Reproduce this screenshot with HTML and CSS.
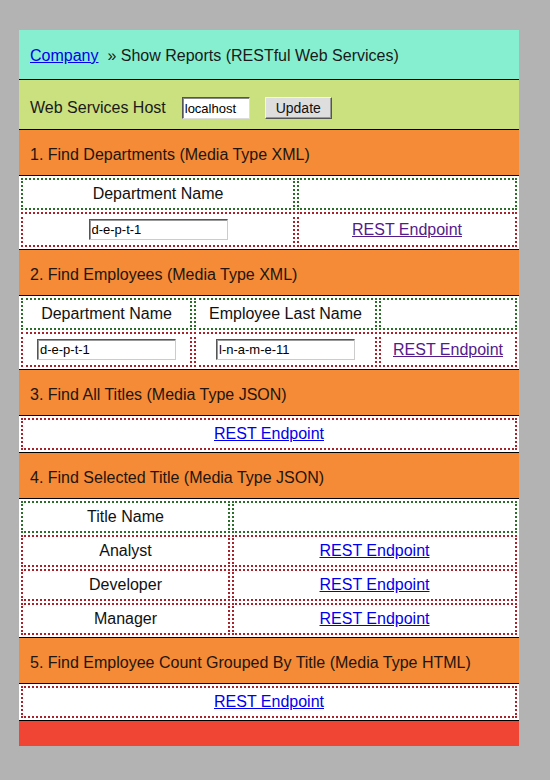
FILE: index.html
```html
<!DOCTYPE html>
<html>
<head>
<meta charset="utf-8">
<title>Show Reports</title>
<link rel="stylesheet" href="styles.css">
</head>
<body>
<div class="page">
  <div class="crumbs"><a href="#" class="link">Company</a>&nbsp;&nbsp;» Show Reports (RESTful Web Services)</div>
  <div class="host">
    <span class="host-label">Web Services Host</span>
    <input class="host-input" type="text" value="localhost">
    <button class="btn" type="button">Update</button>
  </div>

  <div class="sec-head">1. Find Departments (Media Type XML)</div>
  <table class="grid">
    <tr class="head-row"><td class="w-274">Department Name</td><td></td></tr>
    <tr class="data-row"><td><input class="field" type="text" value="d-e-p-t-1"></td><td><a href="#" class="link visited">REST Endpoint</a></td></tr>
  </table>

  <div class="sec-head">2. Find Employees (Media Type XML)</div>
  <table class="grid">
    <tr class="head-row"><td class="w-171">Department Name</td><td class="w-183">Employee Last Name</td><td></td></tr>
    <tr class="data-row"><td><input class="field" type="text" value="d-e-p-t-1"></td><td><input class="field" type="text" value="l-n-a-m-e-11"></td><td><a href="#" class="link visited">REST Endpoint</a></td></tr>
  </table>

  <div class="sec-head">3. Find All Titles (Media Type JSON)</div>
  <table class="grid">
    <tr class="data-row"><td><a href="#" class="link">REST Endpoint</a></td></tr>
  </table>

  <div class="sec-head">4. Find Selected Title (Media Type JSON)</div>
  <table class="grid">
    <tr class="head-row"><td class="w-208">Title Name</td><td></td></tr>
    <tr class="data-row"><td>Analyst</td><td><a href="#" class="link">REST Endpoint</a></td></tr>
    <tr class="data-row"><td>Developer</td><td><a href="#" class="link">REST Endpoint</a></td></tr>
    <tr class="data-row"><td>Manager</td><td><a href="#" class="link">REST Endpoint</a></td></tr>
  </table>

  <div class="sec-head">5. Find Employee Count Grouped By Title (Media Type HTML)</div>
  <table class="grid">
    <tr class="data-row"><td><a href="#" class="link">REST Endpoint</a></td></tr>
  </table>

  <div class="footer"></div>
</div>
</body>
</html>
```

FILE: styles.css
```css
html, body {
  margin: 0;
  padding: 0;
  background: #b3b3b3;
}

body {
  font-family: "Liberation Sans", Arial, sans-serif;
  font-size: 16px;
  line-height: 18px;
  color: #1a1a1a;
}

.page {
  width: 500px;
  margin: 30px 0 0 19px;
  display: flex;
  flex-direction: column;
}

.link {
  color: #0000ee;
  text-decoration: underline;
}

.link.visited {
  color: #551a8b;
}

.crumbs {
  height: 50px;
  box-sizing: border-box;
  background: #86efd0;
  border-bottom: 1px solid #000;
  display: flex;
  align-items: center;
  padding: 2px 11px 0;
  white-space: pre;
}

.host {
  height: 50px;
  box-sizing: border-box;
  background: #cbe07e;
  border-bottom: 1px solid #000;
  display: flex;
  align-items: center;
  padding: 7px 11px 0;
}

.host-label {
  margin-right: 16px;
}

.host-input {
  width: 68px;
  height: 22px;
  box-sizing: border-box;
  font-family: "Liberation Sans", Arial, sans-serif;
  font-size: 13px;
  padding: 1px 2px;
  margin: 0 15px 0 0;
  background: #fff;
  border: 1px solid;
  border-color: #555 #ddd #ddd #555;
  box-shadow: inset 1px 1px 0 #888;
  color: #000;
}

.btn {
  width: 67px;
  height: 22px;
  box-sizing: border-box;
  font-family: "Liberation Sans", Arial, sans-serif;
  font-size: 14px;
  padding: 0;
  margin: 0;
  background: #dedede;
  color: #111;
  border: 1px solid;
  border-color: #f4f4f4 #555 #555 #f4f4f4;
  box-shadow: inset -1px -1px 0 #999;
}

.sec-head {
  height: 46px;
  box-sizing: border-box;
  background: #f58b36;
  border-bottom: 1px solid #000;
  display: flex;
  align-items: center;
  padding: 5px 11px 0;
  color: #221510;
}

.grid {
  width: 500px;
  background: #fff;
  border-collapse: separate;
  border-spacing: 2px;
  border-bottom: 1px solid #000;
  table-layout: fixed;
}

.grid td {
  box-sizing: border-box;
  text-align: center;
  vertical-align: middle;
  padding: 5px 4px;
  color: #111;
}

.head-row td {
  border: 2px dotted #2a6e2a;
  height: 32px;
}

.data-row td {
  border: 2px dotted #a8222a;
  height: 32px;
}

.w-274 { width: 274px; }
.w-171 { width: 171px; }
.w-183 { width: 183px; }
.w-208 { width: 209px; }

.field {
  width: 139px;
  height: 21px;
  box-sizing: border-box;
  font-family: "Liberation Sans", Arial, sans-serif;
  font-size: 13px;
  padding: 1px 2px;
  margin: 0;
  background: #fff;
  color: #000;
  border: 1px solid;
  border-color: #555 #ccc #ccc #555;
  box-shadow: inset 1px 1px 0 #999;
  display: inline-block;
  vertical-align: middle;
}

.footer {
  height: 25px;
  background: #f04535;
}
```
